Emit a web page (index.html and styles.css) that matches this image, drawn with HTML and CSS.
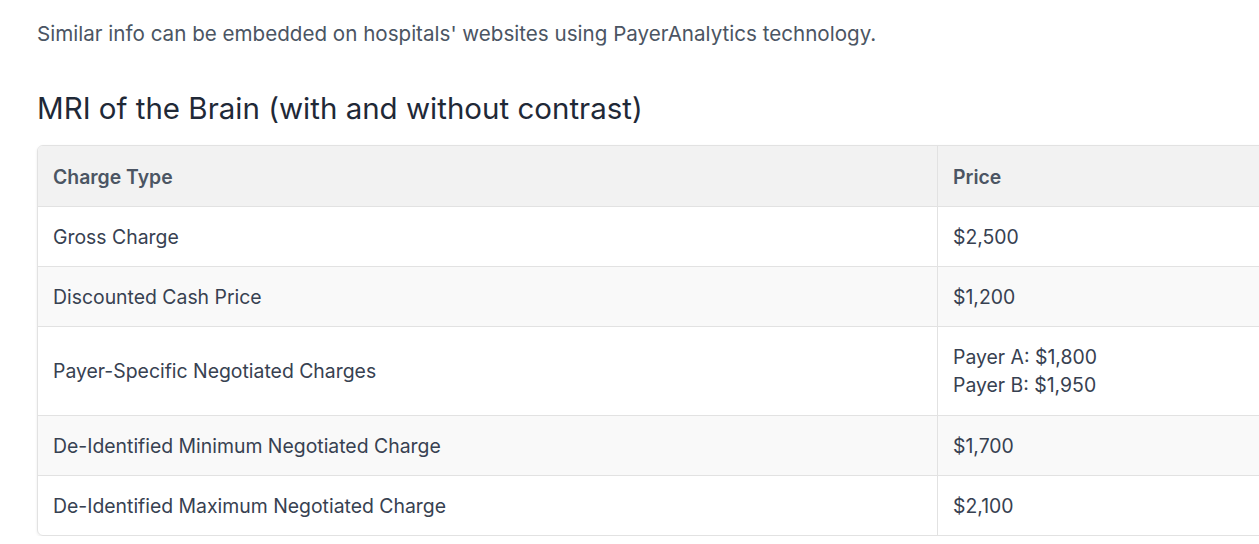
FILE: index.html
```html
<!DOCTYPE html>
<html>
<head>
<meta charset="utf-8">
<link rel="stylesheet" href="styles.css">
</head>
<body>
<main class="page">
  <p class="intro">Similar info can be embedded on hospitals' websites using PayerAnalytics technology.</p>
  <h2 class="title">MRI of the Brain (with and without contrast)</h2>
  <div class="table-wrap">
    <table class="prices">
      <thead>
        <tr><th class="col-type">Charge Type</th><th class="col-price">Price</th></tr>
      </thead>
      <tbody>
        <tr><td>Gross Charge</td><td>$2,500</td></tr>
        <tr><td>Discounted Cash Price</td><td>$1,200</td></tr>
        <tr><td>Payer-Specific Negotiated Charges</td><td><div class="payer">Payer A: $1,800</div><div class="payer">Payer B: $1,950</div></td></tr>
        <tr><td>De-Identified Minimum Negotiated Charge</td><td>$1,700</td></tr>
        <tr><td>De-Identified Maximum Negotiated Charge</td><td>$2,100</td></tr>
      </tbody>
    </table>
  </div>
</main>
</body>
</html>
```
FILE: styles.css
```css
html, body {
  margin: 0;
  padding: 0;
  background: #ffffff;
  font-family: Inter, "Liberation Sans", sans-serif;
  overflow: hidden;
}
.page {
  padding: 19px 0 0 37px;
  width: 1400px;
}
.intro {
  margin: 0;
  font-size: 20.6px;
  line-height: 30px;
  color: #4b5563;
}
.title {
  margin: 41px 0 0;
  font-size: 29.5px;
  font-weight: 400;
  line-height: 36px;
  color: #1f2937;
}
.table-wrap {
  margin-top: 19px;
  width: 1300px;
  border: 1px solid #e2e2e2;
  border-radius: 6px;
  overflow: hidden;
  box-shadow: 0 1px 3px rgba(0,0,0,0.08);
}
.prices {
  width: 100%;
  border-collapse: collapse;
  font-size: 19.4px;
  color: #374151;
}
.prices th, .prices td {
  text-align: left;
  padding: 15.5px 15px;
  line-height: 28px;
  border-bottom: 1px solid #e2e2e2;
}
.prices th + th, .prices td + td {
  border-left: 1px solid #e2e2e2;
}
.prices tbody tr:last-child td {
  border-bottom: none;
}
.prices thead th {
  padding-top: 16.5px;
  background: #f2f2f2;
  font-weight: 600;
  color: #4b5563;
}
.prices tbody tr:nth-child(even) td {
  background: #f9f9f9;
}
.payer {
  line-height: 28.5px;
}
.col-type {
  width: 869px;
}
```
